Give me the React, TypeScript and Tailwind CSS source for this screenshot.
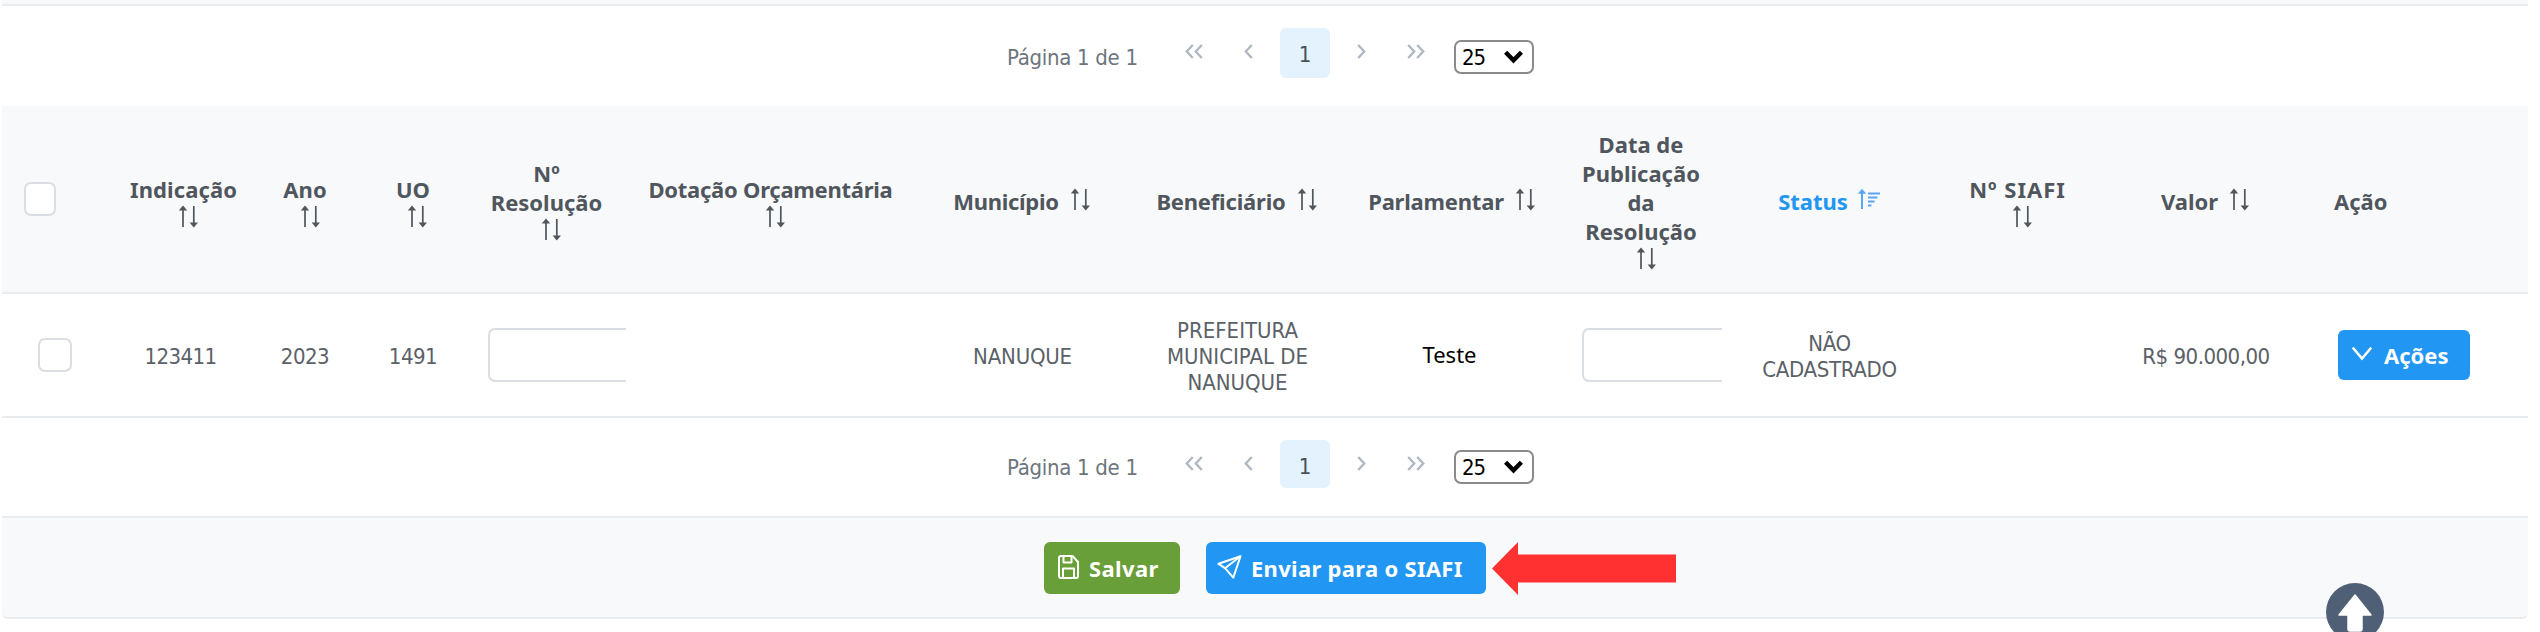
import type { ReactNode } from "react";

function SortIcon() {
  return (
    <svg className="ml-[11px] inline-block h-[23px] w-[22px] align-[-1px]" viewBox="0 0 22 23" fill="none" stroke="currentColor" strokeWidth="1.7">
      <path d="M5 22V2M15.8 1V21" />
      <path d="M0.8 5.6L5 0.6L9.2 5.6ZM11.6 17.4L15.8 22.4L20 17.4Z" fill="currentColor" stroke="none" />
    </svg>
  );
}

function SortAscIcon() {
  return (
    <svg className="ml-[9px] inline-block h-[22px] w-[24px] align-[0px] text-[#5aa5f7]" viewBox="0 0 24 22" fill="none" stroke="currentColor" strokeWidth="2">
      <path d="M5 21V2" />
      <path d="M0.8 5.8L5 0.8L9.2 5.8Z" fill="currentColor" stroke="none" />
      <path d="M11 5.4H23M11 9.6H20.4M11 13.6H17.6M11 17.6H14.4" />
    </svg>
  );
}

function Chevrons({ double, right, className }: { double?: boolean; right?: boolean; className: string }) {
  return (
    <svg
      className={`${className} h-[15px] shrink-0 ${double ? "w-[18px]" : "w-[9px]"} ${right ? "-scale-x-100" : ""}`}
      viewBox={double ? "0 0 18 15" : "0 0 9 15"}
      fill="none"
      stroke="#b0b8c2"
      strokeWidth="2.4"
    >
      <path d="M7.8 1L1.8 7.5L7.8 14" />
      {double && <path d="M16.8 1L10.8 7.5L16.8 14" />}
    </svg>
  );
}

function Paginator({ bottom }: { bottom?: boolean }) {
  return (
    <div className={`flex items-start pl-[1005px] ${bottom ? "h-[98px]" : "h-[100px]"}`}>
      <span className={`w-[133px] whitespace-nowrap tracking-[-0.3px] text-[#6c757d] ${bottom ? "mt-[37px]" : "mt-[39px]"}`}>
        Página 1 de 1
      </span>
      <Chevrons double className="mt-[38px] ml-[45px]" />
      <Chevrons className="mt-[38px] ml-[41px]" />
      <span className={`ml-[27px] flex w-[50px] justify-center rounded-md bg-[#e3f2fd] text-[#495057] ${bottom ? "mt-[22px] h-[48px] pt-[14px]" : "mt-[22px] h-[50px] pt-[14px]"}`}>
        1
      </span>
      <Chevrons right className="mt-[38px] ml-[27px]" />
      <Chevrons double right className="mt-[38px] ml-[41px]" />
      <div className={`ml-[29px] flex h-[34px] w-[80px] items-center justify-between rounded-[7px] border-2 border-[#8a8a8a] bg-white pr-[9px] pl-[6px] text-black ${bottom ? "mt-[32px]" : "mt-[34px]"}`}>
        <span className="pt-[2px] tracking-[-1px]">25</span>
        <svg className="h-[14px] w-[19px]" viewBox="0 0 19 14" fill="none" stroke="currentColor" strokeWidth="4.4">
          <path d="M1.6 2.2L9.5 10.4L17.4 2.2" />
        </svg>
      </div>
    </div>
  );
}

function Cell({ children, className }: { children?: ReactNode; className: string }) {
  return (
    <div className={`flex shrink-0 items-center justify-center text-center whitespace-nowrap ${className}`}>
      <div>{children}</div>
    </div>
  );
}

function Checkbox({ className }: { className: string }) {
  return <div className={`h-[34px] rounded-[7px] border-2 border-[#dadee3] bg-white ${className}`} />;
}

export default function App() {
  return (
    <div className="h-[632px] w-[2540px] overflow-hidden bg-white font-['DejaVu_Sans_Condensed','DejaVu_Sans',sans-serif] text-[22px] leading-[26px] text-[#5b6168]">
      <div className="ml-[2px] w-[2526px]">
        <div className="h-[6px] border-b-2 border-[#e9ecef] bg-[#f8f9fa]" />
        <Paginator />

        <div className="flex h-[188px] border-b-2 border-[#e9ecef] bg-[#f8f9fa] font-['Noto_Sans',sans-serif] leading-[29px] font-bold text-[#50565d]">
          <div className="flex w-[116px] shrink-0 items-center pl-[22px]">
            <Checkbox className="w-[32px]" />
          </div>
          <Cell className="w-[131px] pt-[10px] tracking-[0.1px]">Indicação<br /><SortIcon /></Cell>
          <Cell className="w-[112px] pt-[10px]">Ano<br /><SortIcon /></Cell>
          <Cell className="w-[104px] pt-[10px]">UO<br /><SortIcon /></Cell>
          <Cell className="w-[163px] pt-[7px]">Nº<br />Resolução<br /><SortIcon /></Cell>
          <Cell className="w-[285px] pt-[10px] tracking-[-0.25px]">Dotação Orçamentária<br /><SortIcon /></Cell>
          <Cell className="w-[219px] pt-[5px] tracking-[-0.3px]">Município<SortIcon /></Cell>
          <Cell className="w-[211px] pt-[5px] tracking-[-0.2px]">Beneficiário<SortIcon /></Cell>
          <Cell className="w-[219px] pt-[5px] tracking-[-0.2px]">Parlamentar<SortIcon /></Cell>
          <Cell className="w-[158px] pt-[7px]">Data de<br />Publicação<br />da<br />Resolução<br /><SortIcon /></Cell>
          <Cell className="w-[219px] pt-[5px] text-[#2196f3]">Status<SortAscIcon /></Cell>
          <Cell className="w-[157px] pt-[10px] tracking-[1px]">Nº SIAFI<br /><SortIcon /></Cell>
          <Cell className="w-[220px] pt-[5px]">Valor<SortIcon /></Cell>
          <Cell className="pt-[5px] pl-[18px]">Ação</Cell>
        </div>

        <div className="flex h-[124px] border-b-2 border-[#e9ecef]">
          <div className="flex w-[116px] shrink-0 items-center pl-[36px]">
            <Checkbox className="w-[34px]" />
          </div>
          <Cell className="w-[131px] pt-[3px] pr-[6px] tracking-[-0.6px]">123411</Cell>
          <Cell className="w-[112px] pt-[3px] tracking-[-0.5px]">2023</Cell>
          <Cell className="w-[104px] pt-[3px] tracking-[-0.5px]">1491</Cell>
          <div className="flex w-[163px] shrink-0 items-center pl-[23px]">
            <div className="h-[54px] w-[138px] rounded-l-[7px] border-2 border-r-0 border-[#dadee3]" />
          </div>
          <div className="w-[285px] shrink-0" />
          <Cell className="w-[219px] pt-[3px] tracking-[-0.2px]">NANUQUE</Cell>
          <Cell className="w-[211px] pt-[3px]">PREFEITURA<br />MUNICIPAL DE<br />NANUQUE</Cell>
          <Cell className="w-[219px] pr-[6px] pb-[2px] font-['Noto_Sans',sans-serif] text-black">Teste</Cell>
          <div className="flex w-[158px] shrink-0 items-center pl-[20px]">
            <div className="h-[54px] w-[140px] shrink-0 rounded-l-[7px] border-2 border-r-0 border-[#dadee3]" />
          </div>
          <Cell className="w-[219px] pt-[3px] tracking-[-0.3px]">NÃO<br />CADASTRADO</Cell>
          <div className="w-[157px] shrink-0" />
          <Cell className="w-[220px] pt-[3px] tracking-[-0.5px]">R$ 90.000,00</Cell>
          <div className="flex items-center pl-[22px]">
            <button className="flex h-[50px] w-[132px] items-center rounded-md bg-[#2196f3] pl-[14px] font-['Noto_Sans',sans-serif] font-bold text-white">
              <svg className="mb-[2px] h-[14px] w-[20px]" viewBox="0 0 20 14" fill="none" stroke="currentColor" strokeWidth="2.6" strokeLinecap="round">
                <path d="M1.5 1.5L10 11.5L18.5 1.5" />
              </svg>
              <span className="ml-[12px] pb-px">Ações</span>
            </button>
          </div>
        </div>

        <Paginator bottom />

        <div className="flex h-[103px] items-start rounded-b-md border-y-2 border-[#e9ecef] bg-[#f8f9fa] pt-[24px] pl-[1042px] font-['Noto_Sans',sans-serif] font-bold text-white">
          <button className="flex h-[52px] w-[136px] items-center rounded-md bg-[#689f38] pl-[14px]">
            <svg className="mb-[2px] h-[24px] w-[21px]" viewBox="0 0 21 24" fill="none" stroke="currentColor" strokeWidth="2" strokeLinejoin="round">
              <path d="M3 1H14.5L20 7V21Q20 23 18 23H3Q1 23 1 21V3Q1 1 3 1Z" />
              <path d="M5.5 1V7.5H13.5V1M5 23V13.5H16V23" />
            </svg>
            <span className="ml-[10px] pb-px tracking-[0.4px]">Salvar</span>
          </button>
          <button className="ml-[26px] flex h-[52px] w-[280px] items-center rounded-md bg-[#2196f3] pl-[11px]">
            <svg className="mb-[3px] h-[24px] w-[25px]" viewBox="0 0 25 24" fill="none" stroke="currentColor" strokeWidth="2" strokeLinejoin="round">
              <path d="M23.5 1.2L1.5 8.8L8 13.2L16.3 22.6Z" />
              <path d="M23.5 1.2L8 13.2" />
            </svg>
            <span className="ml-[9px] pb-px tracking-[0.3px] whitespace-nowrap">Enviar para o SIAFI</span>
          </button>
          <svg className="ml-[6px] h-[53px] w-[184px]" viewBox="0 0 184 53">
            <path d="M0 26.5L26 0V12.5H184V40.5H26V53Z" fill="#ff3131" />
          </svg>
        </div>
      </div>

      <div className="absolute top-[583px] left-[2326px] h-[49px] w-[58px] overflow-hidden">
        <svg className="h-[58px] w-[58px]" viewBox="0 0 58 58">
          <circle cx="29" cy="29" r="29" fill="#4f5f76" />
          <path d="M29 12L45 32H36V46Q36 48 34 48H24Q22 48 22 46V32H13Z" fill="#fff" stroke="#fff" strokeWidth="1.5" strokeLinejoin="round" />
        </svg>
      </div>
    </div>
  );
}
